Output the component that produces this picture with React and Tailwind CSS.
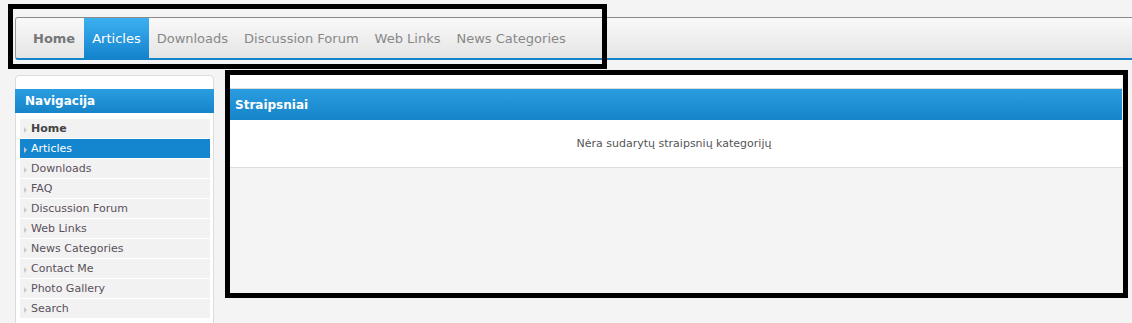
import React from "react";

const topLinks = ["Home", "Articles", "Downloads", "Discussion Forum", "Web Links", "News Categories"];
const sideLinks = ["Home", "Articles", "Downloads", "FAQ", "Discussion Forum", "Web Links", "News Categories", "Contact Me", "Photo Gallery", "Search"];

export default function App() {
  return (
    <div className="relative min-h-[323px] overflow-hidden bg-[#f4f4f4] pt-[17px] font-['DejaVu_Sans',Verdana,sans-serif]">
      {/* Top navigation bar */}
      <div className="ml-[15px] flex h-[43px] rounded-tl-[3px] rounded-bl-[3px] border-t border-l border-b-2 border-t-[#8a8a8a] border-l-[#9a9a9a] border-b-[#1584c8] bg-gradient-to-b from-[#f9f9f9] to-[#e5e5e5] pl-[9px]">
        {topLinks.map((link, i) => (
          <div
            key={link}
            className={`flex items-center px-[8px] pt-[2px] text-[13px] ${
              i === 0
                ? "font-bold text-[#777]"
                : i === 1
                ? "ml-px bg-gradient-to-b from-[#3cb0f1] to-[#1284cd] text-white"
                : "text-[#888]"
            }`}
          >
            {link}
          </div>
        ))}
      </div>

      <div className="mt-[15px] flex items-start">
        {/* Sidebar */}
        <div className="ml-[15px] w-[199px] rounded-t-[4px] border border-[#dcdcdc] bg-white pb-[20px]">
          <div className="h-[13px]" />
          <div className="-mx-px flex h-[24px] items-center bg-gradient-to-b from-[#2a9de0] to-[#1584c8] pl-[10px] text-[12px] font-bold text-white">
            Navigacija
          </div>
          <div className="mt-[6px] flex flex-col gap-px pl-[4px] pr-[3px]">
            {sideLinks.map((link, i) => (
              <div
                key={link}
                className={`flex h-[19px] items-center pt-[2px] text-[11px] ${
                  i === 1 ? "bg-[#1386cf] text-white" : "bg-[#f2f2f2] text-[#5a505a]"
                } ${i === 0 ? "font-bold text-[#444]" : ""}`}
              >
                <span className="ml-[4px] mr-[4px] h-0 w-0 border-y-[3px] border-l-[3px] border-y-transparent border-l-[#c9c9c9]" />
                {link}
              </div>
            ))}
          </div>
        </div>

        {/* Main content */}
        <div className="ml-[12px] w-[896px]">
          <div className="h-[14px] border-b border-[#dddddd] bg-white" />
          <div className="flex h-[31px] items-center bg-gradient-to-b from-[#2a9de0] to-[#1584c8] pl-[9px] pt-px text-[12px] font-bold text-white">
            Straipsniai
          </div>
          <div className="flex h-[48px] items-center justify-center border-b border-[#dddddd] bg-white pt-[2px] text-[11px] text-[#555]">
            Nėra sudarytų straipsnių kategorijų
          </div>
        </div>
      </div>

      {/* Annotation frames */}
      <div className="pointer-events-none absolute left-[8px] top-[4px] h-[65px] w-[599px] border-[5px] border-black" />
      <div className="pointer-events-none absolute left-[225px] top-[70px] h-[228px] w-[903px] border-[5px] border-black" />
    </div>
  );
}
